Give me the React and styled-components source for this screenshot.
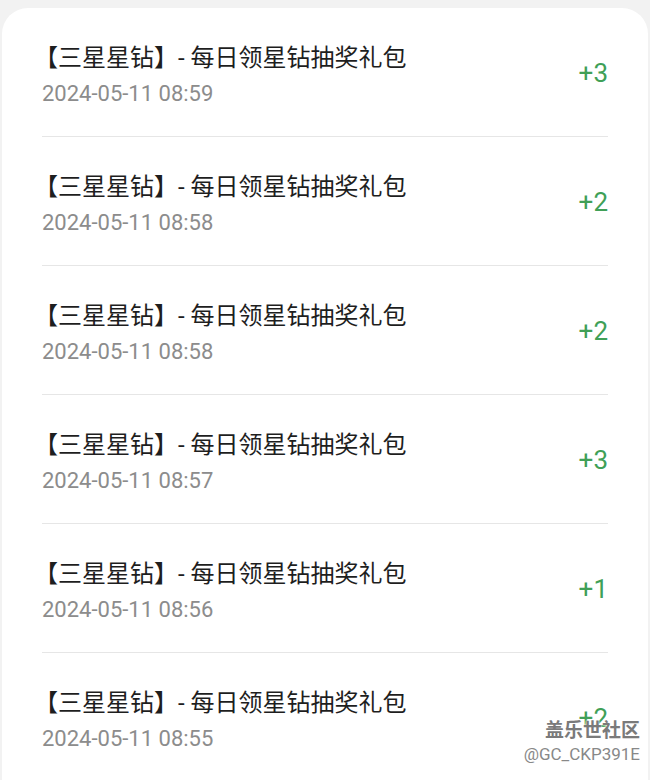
import React from "react";
import styled, { createGlobalStyle } from "styled-components";

const records = [
  { time: "2024-05-11 08:59", points: 3 },
  { time: "2024-05-11 08:58", points: 2 },
  { time: "2024-05-11 08:58", points: 2 },
  { time: "2024-05-11 08:57", points: 3 },
  { time: "2024-05-11 08:56", points: 1 },
  { time: "2024-05-11 08:55", points: 2 },
];

function App() {
  return (
    <Page>
      <GlobalStyle />
      <Card>
        {records.map((r, i) => (
          <Row key={i}>
            <Info>
              <Title>【三星星钻】- 每日领星钻抽奖礼包</Title>
              <Time>{r.time}</Time>
            </Info>
            <Points>+{r.points}</Points>
          </Row>
        ))}
      </Card>
      <Watermark>
        <Brand>盖乐世社区</Brand>
        <Handle>@GC_CKP391E</Handle>
      </Watermark>
    </Page>
  );
}

const GlobalStyle = createGlobalStyle`
  body {
    margin: 0;
    background: #f2f2f2;
    font-family: Roboto, "Noto Sans CJK SC", sans-serif;
    overflow: hidden;
  }
`;

const Page = styled.div`
  position: relative;
  height: 780px;
  overflow: hidden;
  padding-top: 8px;
  box-sizing: border-box;
`;

const Card = styled.div`
  margin: 0 2px;
  background: #fff;
  border-radius: 26px 26px 0 0;
  padding: 0 40px;
  height: 800px;
`;

const Row = styled.div`
  display: flex;
  align-items: center;
  justify-content: space-between;
  padding: 33px 0 25px;
  border-bottom: 1px solid #e6e6e6;
`;

const Info = styled.div`
  display: flex;
  flex-direction: column;
  gap: 2px;
`;

/* the CJK bracket sits right in its em box, pull it flush with the date */
const Title = styled.div`
  font-size: 24px;
  line-height: 34px;
  color: #1e1e1e;
  text-indent: -8px;
`;

const Time = styled.div`
  font-size: 22px;
  line-height: 34px;
  color: #8c8c8c;
`;

const Points = styled.div`
  font-size: 26px;
  color: #40a057;
  margin-top: -6px;
`;

const Watermark = styled.div`
  position: absolute;
  right: 10px;
  bottom: 16px;
  display: flex;
  flex-direction: column;
  align-items: flex-end;
  gap: 4px;
`;

const Brand = styled.div`
  font-size: 19px;
  font-weight: bold;
  color: #7a7a7a;
  text-shadow: 0 0 2px #fff, 0 0 2px #fff;
  font-family: "Noto Sans CJK SC", sans-serif;
  line-height: 22px;
`;

const Handle = styled.div`
  font-size: 17px;
  color: #888;
  text-shadow: 0 0 2px #fff;
  line-height: 20px;
`;

export default App;
